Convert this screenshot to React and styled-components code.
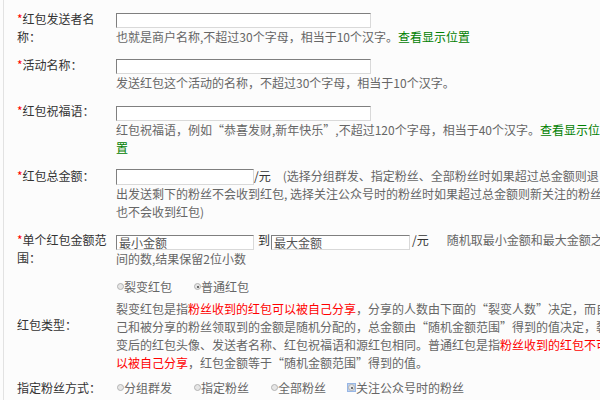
import React from 'react';
import styled, { createGlobalStyle, css } from 'styled-components';

const GlobalStyle = createGlobalStyle`
  html, body {
    margin: 0;
    padding: 0;
    background: #fcfcfc;
    overflow: hidden;
  }
  body {
    font-family: "Noto Sans CJK SC", "Microsoft YaHei", sans-serif;
    font-size: 12px;
  }
`;

const Wrap = styled.div`
  margin-left: 3px;
  border-left: 1px solid #e2e2e2;
  padding: 5px 0 0 13px;
  width: 640px;
  min-height: 400px;
  box-sizing: border-box;
`;

const Row = styled.div`
  display: flex;
  align-items: ${(p) => (p.$middle ? 'center' : 'flex-start')};
  padding: ${(p) => p.$pad || '5px 0'};
`;

const Label = styled.div`
  width: 95px;
  flex: none;
  color: #333;
  line-height: 18px;
`;

const Star = styled.span`
  color: #ff0000;
`;

const Field = styled.div`
  width: 492px;
  flex: none;
  margin-left: 4px;
  color: #666;
  line-height: 18px;
`;

const Input = styled.input`
  box-sizing: border-box;
  width: ${(p) => p.$w || 255}px;
  height: ${(p) => p.$h || 15}px;
  margin: 0;
  padding: 0 2px;
  vertical-align: middle;
  background: #fff;
  border-top: 1px solid #7f7f7f;
  border-left: 1px solid #7f7f7f;
  border-right: 1px solid #d9d9d9;
  border-bottom: 1px solid #d9d9d9;
  font-family: inherit;
  font-size: 12px;
  color: #555;
  outline: none;

  &::placeholder {
    color: #555;
  }
`;

const Hint = styled.div`
  color: #666;
  margin-top: ${(p) => p.$top || 0}px;
  margin-right: ${(p) => (p.$wide ? -7 : 0)}px;
`;

const Link = styled.a`
  color: #008000;
  text-decoration: none;
  cursor: pointer;
`;

const Red = styled.span`
  color: #ff0000;
`;

const Unit = styled.span`
  color: #333;
  margin-left: ${(p) => p.$before || 0}px;
  margin-right: ${(p) => p.$after || 0}px;
`;

const Options = styled.div`
  display: flex;
  align-items: center;
  height: 18px;
  white-space: nowrap;
`;

const Option = styled.label`
  display: inline-flex;
  align-items: center;
  width: ${(p) => (p.$auto ? 'auto' : '77px')};
  color: #666;
  cursor: pointer;
`;

const Dot = styled.span`
  position: relative;
  display: inline-block;
  box-sizing: border-box;
  width: 7px;
  height: 7px;
  margin: 0 0 0 ${(p) => (p.$inner ? 0 : 1)}px;
  border-radius: 50%;
  border: 1px solid #b3b3b3;
  background: #e6e6e6;

  ${(p) =>
    p.$checked &&
    css`
      &::after {
        content: '';
        position: absolute;
        left: 1.5px;
        top: 1.5px;
        width: 2px;
        height: 2px;
        border-radius: 50%;
        background: #444;
      }
    `}
`;

const Focus = styled.span`
  display: inline-flex;
  align-items: center;
  justify-content: center;
  box-sizing: border-box;
  width: 9px;
  height: 9px;
  background: #bcd2f2;
  border: 1px solid #98b6e4;
  margin-left: 0;
`;

const Radio = ({ checked, focus, auto, children }) => (
  <Option $auto={auto}>
    {focus ? (
      <Focus>
        <Dot $checked={checked} $inner />
      </Focus>
    ) : (
      <Dot $checked={checked} />
    )}
    {children}
  </Option>
);

const App = () => (
  <>
    <GlobalStyle />
    <Wrap>
      <Row>
        <Label>
          <Star>*</Star>红包发送者名称：
        </Label>
        <Field>
          <Input type="text" />
          <Hint>
            也就是商户名称,不超过30个字母，相当于10个汉字。<Link>查看显示位置</Link>
          </Hint>
        </Field>
      </Row>

      <Row>
        <Label>
          <Star>*</Star>活动名称：
        </Label>
        <Field>
          <Input type="text" />
          <Hint>发送红包这个活动的名称，不超过30个字母，相当于10个汉字。</Hint>
        </Field>
      </Row>

      <Row>
        <Label>
          <Star>*</Star>红包祝福语：
        </Label>
        <Field>
          <Input type="text" />
          <Hint>
            红包祝福语，例如“恭喜发财,新年快乐”,不超过120个字母，相当于40个汉字。
            <Link>查看显示位置</Link>
          </Hint>
        </Field>
      </Row>

      <Row>
        <Label>
          <Star>*</Star>红包总金额：
        </Label>
        <Field>
          <Input type="text" $w={138} $h={16} />
          <Unit $after={12}>/元</Unit>
          (选择分组群发、指定粉丝、全部粉丝时如果超过总金额则退出发送剩下的粉丝不会收到红包, 选择关注公众号时的粉丝时如果超过总金额则新关注的粉丝
          <br />
          也不会收到红包)
        </Field>
      </Row>

      <Row>
        <Label>
          <Star>*</Star>单个红包金额范围：
        </Label>
        <Field>
          <Input type="text" $w={138} placeholder="最小金额" />
          <Unit $before={4} $after={1}>到</Unit>
          <Input type="text" $w={139} placeholder="最大金额" />
          <Unit $before={2} $after={18}>/元</Unit>
          随机取最小金额和最大金额之间的数,结果保留2位小数
        </Field>
      </Row>

      <Row $middle $pad="5px 0 3px">
        <Label>红包类型：</Label>
        <Field>
          <Options>
            <Radio>裂变红包</Radio>
            <Radio checked>普通红包</Radio>
          </Options>
          <Hint $top={4} $wide>
            裂变红包是指<Red>粉丝收到的红包可以被自己分享</Red>
            ，分享的人数由下面的“裂变人数”决定，而自己和被分享的粉丝领取到的金额是随机分配的，总金额由“随机金额范围”得到的值决定，裂变后的红包头像、发送者名称、红包祝福语和源红包相同。普通红包是指
            <Red>粉丝收到的红包不可以被自己分享</Red>，红包金额等于“随机金额范围”得到的值。
          </Hint>
        </Field>
      </Row>

      <Row $middle $pad="4px 0">
        <Label>指定粉丝方式：</Label>
        <Field>
          <Options>
            <Radio>分组群发</Radio>
            <Radio>指定粉丝</Radio>
            <Radio>全部粉丝</Radio>
            <Radio checked focus auto>
              关注公众号时的粉丝
            </Radio>
          </Options>
        </Field>
      </Row>
    </Wrap>
  </>
);

export default App;
